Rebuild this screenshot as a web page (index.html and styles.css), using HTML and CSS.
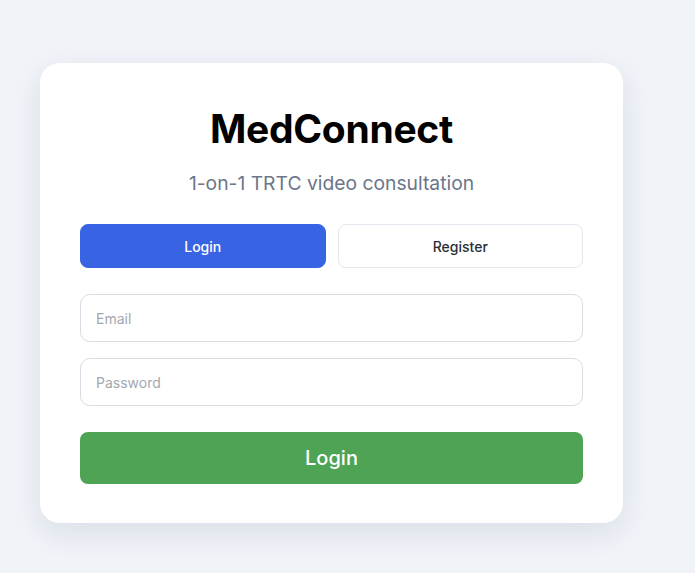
FILE: index.html
```html
<!DOCTYPE html>
<html lang="en">
<head>
<meta charset="utf-8">
<title>MedConnect</title>
<link rel="stylesheet" href="styles.css">
</head>
<body>
<main class="page">
  <section class="card">
    <h1 class="title">MedConnect</h1>
    <p class="subtitle">1-on-1 TRTC video consultation</p>
    <div class="tabs">
      <button class="tab tab-active" type="button">Login</button>
      <button class="tab" type="button">Register</button>
    </div>
    <form class="form">
      <input class="field" type="email" placeholder="Email">
      <input class="field" type="password" placeholder="Password">
      <button class="submit" type="button">Login</button>
    </form>
  </section>
</main>
</body>
</html>
```
FILE: styles.css
```css
* { box-sizing: border-box; }
html, body { margin: 0; padding: 0; }
body {
  background: #f0f3f8;
  font-family: Inter, "Noto Sans", "Liberation Sans", sans-serif;
  width: 695px;
  height: 573px;
  overflow: hidden;
}
.page {
  padding: 63px 0 0 40px;
}
.card {
  width: 583px;
  background: #ffffff;
  border-radius: 20px;
  box-shadow: 0 10px 30px rgba(30, 50, 90, 0.10);
  padding: 44px 40px 39px 40px;
  display: flex;
  flex-direction: column;
}
.title {
  margin: 0;
  font-size: 39px;
  font-weight: 700;
  line-height: 44px;
  text-align: center;
  color: #000;
  letter-spacing: -0.3px;
}
.subtitle {
  margin: 18px 0 0 0;
  font-size: 19.3px;
  line-height: 28px;
  text-align: center;
  color: #6b7689;
}
.tabs {
  margin-top: 27px;
  display: flex;
  gap: 12px;
}
.tab {
  flex: 1;
  height: 44px;
  border-radius: 8px;
  border: 1px solid #e3e7ee;
  background: #fff;
  color: #2a2e34;
  font-family: inherit;
  font-size: 14px;
  font-weight: 500;
}
.tab-active {
  background: #3864e4;
  border-color: #3864e4;
  color: #fff;
}
.form {
  margin-top: 26px;
  display: flex;
  flex-direction: column;
  gap: 16px;
}
.field {
  height: 48px;
  border: 1.5px solid #d8dce3;
  border-radius: 10px;
  padding: 0 15px;
  font-family: inherit;
  font-size: 14px;
  color: #222;
  background: #fff;
}
.field::placeholder { color: #a3a7ae; }
.submit {
  margin-top: 10px;
  height: 52px;
  border: none;
  border-radius: 8px;
  background: #4ea355;
  color: #fff;
  font-family: inherit;
  font-size: 20px;
  font-weight: 500;
}
```
